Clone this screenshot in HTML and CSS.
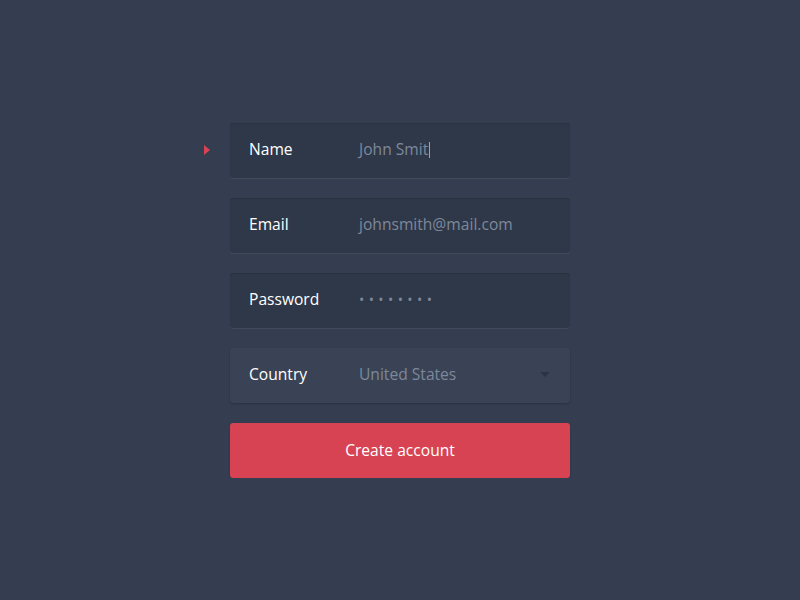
FILE: index.html
```html
<!DOCTYPE html>
<html lang="en">
<head>
  <meta charset="UTF-8">
  <title>Create account</title>
  <meta name="viewport" content="width=device-width, initial-scale=1.0">
  <link rel="stylesheet" href="styles.css">
</head>
<body>
  <form class="signup" onsubmit="event.preventDefault()">
    <div class="field active">
      <span class="label">Name</span>
      <span class="value">John Smit<span class="caret"></span></span>
    </div>
    <div class="field">
      <span class="label">Email</span>
      <span class="value">johnsmith@mail.com</span>
    </div>
    <div class="field">
      <span class="label">Password</span>
      <span class="value dots">••••••••</span>
    </div>
    <div class="field select">
      <span class="label">Country</span>
      <span class="value">United States</span>
      <span class="chevron"></span>
    </div>
    <button type="submit">Create account</button>
  </form>
</body>
</html>
```

FILE: styles.css
```css
body { margin: 0; background: #343e50; font-family: "Open Sans", "Noto Sans", sans-serif; font-size: 15.6px; }
.signup { width: 340px; margin: 123px auto 0; display: flex; flex-direction: column; gap: 20px; }
.field { position: relative; height: 55px; box-sizing: border-box; display: flex; align-items: center; padding: 0 19px 3px; background: #2f3848; border-radius: 3px; box-shadow: inset 0 1px 1px rgba(0,0,0,0.12), 0 1px 0 rgba(255,255,255,0.07); }
.label { width: 110px; flex-shrink: 0; color: #fff; }
.value { color: #7d889b; }
.caret { display: inline-block; width: 1px; height: 16px; margin-left: 1px; background: #9aa4b5; vertical-align: -3px; }
.dots { font-size: 14px; letter-spacing: 4.4px; }
.active::before { content: ""; position: absolute; left: -26px; top: 22px; border-left: 6px solid #d84354; border-top: 5px solid transparent; border-bottom: 5px solid transparent; }
.select { background: #394355; box-shadow: 0 1px 2px rgba(0,0,0,0.2); }
.chevron { margin-left: auto; border-top: 5px solid #2c3444; border-left: 5px solid transparent; border-right: 5px solid transparent; margin-right: 1px; }
button { height: 55px; padding-bottom: 3px; border: none; border-radius: 3px; background: #d84354; color: #fff; font: inherit; cursor: pointer; box-shadow: 0 1px 2px rgba(0,0,0,0.2); }
```
